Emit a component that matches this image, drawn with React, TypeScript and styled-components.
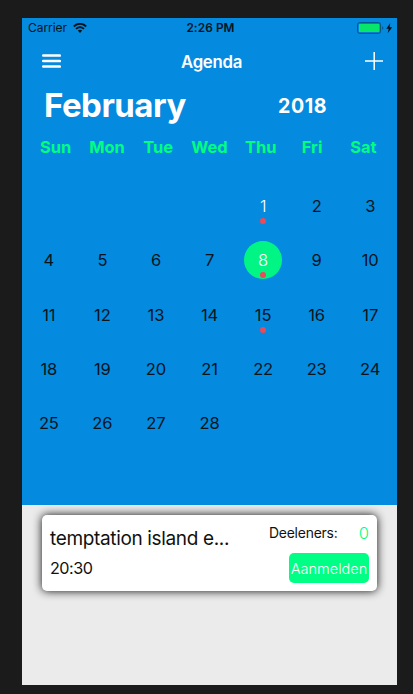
import React from 'react';
import styled, { createGlobalStyle } from 'styled-components';

const GlobalStyle = createGlobalStyle`
  * { box-sizing: border-box; }
  html, body { margin: 0; background: #1b1b1b; }
  body { font-family: Inter, 'Liberation Sans', sans-serif; color: #06141d; }
`;

const Backdrop = styled.div`
  width: 413px;
  height: 694px;
  padding: 18px 16px 9px 22px;
  background: #1b1b1b;
  overflow: hidden;
`;

const Screen = styled.main`
  width: 375px;
  height: 667px;
  background: #ebebeb;
`;

const Calendar = styled.section`
  height: 487px;
  background: #048ade;
`;

const StatusBar = styled.div`
  height: 20px;
  padding: 0 4px 0 6px;
  display: grid;
  grid-template-columns: 1fr auto 1fr;
  align-items: center;
  font-size: 12px;
  line-height: 20px;
`;

const Carrier = styled.div`
  display: flex;
  align-items: center;
  gap: 6px;
  letter-spacing: -0.05px;
`;

const Clock = styled.div`
  font-size: 11.8px;
  font-weight: 600;
  letter-spacing: 0.1px;
`;

const Power = styled.div`
  display: flex;
  justify-content: flex-end;
`;

const NavBar = styled.header`
  height: 44px;
  padding: 2px 14px 0 19px;
  display: grid;
  grid-template-columns: 20px 1fr 18px;
  align-items: center;
  svg { display: block; }
`;

const NavTitle = styled.h1`
  margin: 2px 3px 0 0;
  text-align: center;
  font-size: 16.8px;
  line-height: 20px;
  font-weight: 600;
  letter-spacing: -0.3px;
  color: #fff;
`;

const MonthRow = styled.div`
  height: 47px;
  padding-left: 22px;
  display: flex;
  align-items: center;
  color: #fff;
`;

const Month = styled.div`
  width: 234px;
  margin-top: -2px;
  font-size: 33px;
  line-height: 40px;
  font-weight: 700;
  letter-spacing: -0.5px;
`;

const Year = styled.div`
  font-size: 19.6px;
  line-height: 40px;
  font-weight: 700;
  letter-spacing: 0.6px;
`;

const Weekdays = styled.div`
  height: 36px;
  padding: 0 8px;
  display: grid;
  grid-template-columns: repeat(7, 1fr);
  text-align: center;
  font-size: 16.4px;
  line-height: 36px;
  font-weight: 700;
  color: #00ff7f;
`;

const Days = styled.div`
  padding-top: 13.9px;
  display: grid;
  grid-template-columns: repeat(7, 1fr);
  grid-auto-rows: 54.35px;
  justify-items: center;
  align-items: center;
`;

const Day = styled.div<{ $light?: boolean; $selected?: boolean; $column?: number }>`
  position: relative;
  width: 38px;
  height: 38px;
  border-radius: 50%;
  text-align: center;
  font-size: 16.5px;
  line-height: 38px;
  letter-spacing: -0.15px;
  ${(p) => p.$column && `grid-column: ${p.$column};`}
  font-weight: ${(p) => (p.$light ? 350 : 400)};
  color: ${(p) => (p.$light ? '#fff' : '#06141d')};
  background: ${(p) => (p.$selected ? '#00f584' : 'transparent')};
`;

const EventDot = styled.span`
  position: absolute;
  left: 16px;
  bottom: 1px;
  width: 6px;
  height: 6px;
  border-radius: 50%;
  background: #e94b5b;
`;

const EventCard = styled.article`
  width: 335px;
  height: 76px;
  margin: 10px 0 0 20px;
  padding: 8px;
  display: flex;
  justify-content: space-between;
  border-radius: 5px;
  background: #fff;
  color: #111;
  box-shadow: 0 0 10px rgba(0, 0, 0, 0.95);
`;

const EventInfo = styled.div`
  width: 190px;
`;

const EventName = styled.div`
  height: 31px;
  font-size: 19px;
  line-height: 31px;
  letter-spacing: -0.35px;
  white-space: nowrap;
`;

const EventTime = styled.div`
  font-size: 16.2px;
  line-height: 29px;
  letter-spacing: -0.5px;
`;

const EventActions = styled.div`
  width: 100px;
  display: flex;
  flex-direction: column;
  align-items: flex-end;
`;

const Attendance = styled.div`
  width: 100%;
  height: 30px;
  display: flex;
  justify-content: space-between;
  align-items: flex-start;
`;

const AttendanceLabel = styled.span`
  font-size: 13.9px;
  line-height: 21px;
  letter-spacing: -0.2px;
  white-space: nowrap;
`;

const AttendanceCount = styled.span`
  font-size: 16.5px;
  line-height: 21px;
  font-weight: 350;
  color: #00ff7f;
`;

const SignUp = styled.button`
  width: 80px;
  height: 30px;
  padding: 1px 0 0;
  border: 0;
  border-radius: 5px;
  background: #00ff84;
  color: #fff;
  font: 350 14.5px/29px Inter, sans-serif;
  white-space: nowrap;
`;

const WifiIcon = () => (
  <svg width="14" height="10" viewBox="0 0 14 10" fill="none" stroke="#06141d">
    <path d="M.8 3.4C4.5.1 9.5.1 13.2 3.4" strokeWidth="2" />
    <path d="M3 5.8c2.4-2.1 5.6-2.1 8 0" strokeWidth="1.7" />
    <path d="M4.8 7.6c1.3-1.1 3.1-1.1 4.4 0L7 9.9z" fill="#06141d" stroke="none" />
  </svg>
);

const BatteryIcon = () => (
  <svg width="36" height="12" viewBox="0 0 36 12">
    <rect x=".6" y=".7" width="23" height="10.6" rx="2" fill="none" stroke="#064f7e" />
    <rect x="2" y="2" width="20.3" height="8" rx=".7" fill="#06e66b" />
    <path d="M25.3 4.2c1.4.5 1.4 3.1 0 3.6z" fill="#064f7e" />
    <path d="M33.3.9 29.3 6.7h2.4l-1 4.5 4.5-5.9h-2.6z" fill="#06141d" />
  </svg>
);

const MenuIcon = () => (
  <svg width="20" height="16" viewBox="0 0 20 16" stroke="#fff" strokeWidth="2.7" strokeLinecap="round">
    <path d="M2.3 2.5h16.4M2.3 8h16.4M2.3 13.5h16.4" />
  </svg>
);

const PlusIcon = () => (
  <svg width="18" height="18" viewBox="0 0 18 18" stroke="#fff" strokeWidth="1.5">
    <path d="M0 9h18M9.2 0v18" />
  </svg>
);

const weekdays = ['Sun', 'Mon', 'Tue', 'Wed', 'Thu', 'Fri', 'Sat'];
const days = Array.from({ length: 28 }, (_, i) => i + 1);
const eventDays = [1, 8, 15];
const selectedDay = 8;

export default function App() {
  return (
    <Backdrop>
      <GlobalStyle />
      <Screen>
        <Calendar>
          <StatusBar>
            <Carrier>Carrier <WifiIcon /></Carrier>
            <Clock>2:26 PM</Clock>
            <Power><BatteryIcon /></Power>
          </StatusBar>
          <NavBar>
            <MenuIcon />
            <NavTitle>Agenda</NavTitle>
            <PlusIcon />
          </NavBar>
          <MonthRow>
            <Month>February</Month>
            <Year>2018</Year>
          </MonthRow>
          <Weekdays>
            {weekdays.map((name) => <span key={name}>{name}</span>)}
          </Weekdays>
          <Days>
            {days.map((day) => (
              <Day
                key={day}
                $column={day === 1 ? 5 : undefined}
                $light={day === 1 || day === selectedDay}
                $selected={day === selectedDay}
              >
                {day}
                {eventDays.includes(day) && <EventDot />}
              </Day>
            ))}
          </Days>
        </Calendar>
        <EventCard>
          <EventInfo>
            <EventName>temptation island e...</EventName>
            <EventTime>20:30</EventTime>
          </EventInfo>
          <EventActions>
            <Attendance>
              <AttendanceLabel>Deeleners:</AttendanceLabel>
              <AttendanceCount>0</AttendanceCount>
            </Attendance>
            <SignUp>Aanmelden</SignUp>
          </EventActions>
        </EventCard>
      </Screen>
    </Backdrop>
  );
}
